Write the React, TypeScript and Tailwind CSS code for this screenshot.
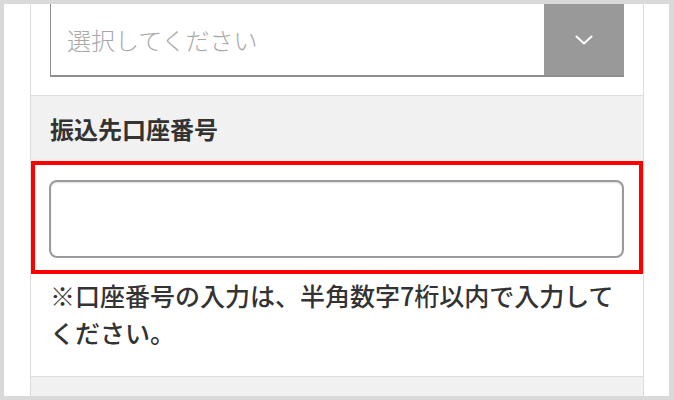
import React from "react"

const ChevronDown = () => (
  <svg width="18" height="10" viewBox="0 0 18 10" fill="none">
    <path d="M1.5 1.5 L9 8.5 L16.5 1.5" stroke="#ffffff" strokeWidth="2" strokeLinecap="round" strokeLinejoin="round" />
  </svg>
)

const App = () => {
  return (
    <div
      className="w-[674px] h-[400px] bg-[#d9d9d9] pt-[4px] pb-[4px] pl-[4px] pr-[5px] overflow-hidden"
      style={{ fontFamily: '"Noto Sans CJK JP", "Noto Sans", sans-serif' }}
    >
      <div className="bg-white h-full pl-[26px] pr-[25px]">
        <div className="h-full border-x border-[#dddddd] flex flex-col overflow-hidden">
          {/* bank select */}
          <div className="px-[19px] pb-[18px] border-b border-[#dddddd]">
            <div className="flex h-[73px] border-l border-b-2 border-[#8e8e8e] bg-white">
              <div className="flex-1 flex items-center pl-[16px] text-[24px] text-[#a8a8a8] font-light">
                選択してください
              </div>
              <div className="w-[80px] bg-[#999999] flex items-center justify-center">
                <ChevronDown />
              </div>
            </div>
          </div>

          {/* label */}
          <div className="bg-[#f1f1f1] h-[65px] px-[19px] flex items-center">
            <h2 className="text-[24px] font-bold text-[#333333] leading-none">振込先口座番号</h2>
          </div>

          {/* account number input */}
          <div className="border-4 border-[#ff0000] pl-[14px] pr-[15px] pt-[15px] pb-[12px]">
            <input
              type="text"
              className="block w-full h-[78px] rounded-[8px] border-2 border-[#9a9a9a] bg-white shadow-[inset_0_1px_2px_rgba(0,0,0,0.12)] outline-none"
            />
          </div>

          <div className="bg-white px-[19px] pt-[3px] h-[102px]">
            <p className="text-[25px] leading-[37px] text-[#333333] font-medium">
              ※口座番号の入力は、半角数字7桁以内で入力してください。
            </p>
          </div>

          <div className="flex-1 border-t border-[#dddddd] bg-[#f1f1f1]" />
        </div>
      </div>
    </div>
  )
}

export default App
